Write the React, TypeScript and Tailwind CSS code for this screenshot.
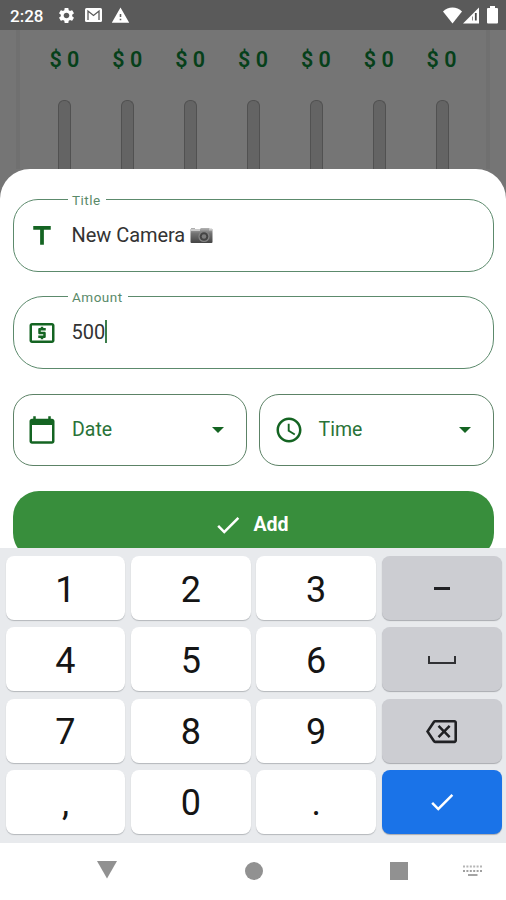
import type { ReactNode } from "react";
import {
  MdAccessTime,
  MdCalendarToday,
  MdCheck,
  MdLocalAtm,
  MdOutlineBackspace,
  MdSettings,
  MdTitle,
  MdWarning,
} from "react-icons/md";

const days = [0, 0, 0, 0, 0, 0, 0];

function StatusBar() {
  return (
    <header className="flex h-[30px] shrink-0 items-center bg-[#5a5a5a] pl-[10px] pr-[8px] text-white">
      <span className="w-[47px] pt-[1px] text-[17px] font-medium leading-[20px]">2:28</span>
      <MdSettings size={19} />
      <svg className="ml-[9px]" width="17" height="14" viewBox="0 0 17 14">
        <rect width="17" height="14" rx="1.5" fill="#fff" />
        <path d="M3 12V3l5.500 4.500L14 3v9" fill="none" stroke="#5a5a5a" strokeWidth="1.300" />
      </svg>
      <MdWarning className="ml-[9px]" size={19} />
      <div className="ml-auto flex items-center">
        <svg width="19" height="17" viewBox="0 0 19 17">
          <path d="M0 4.500C5-.8 14-.8 19 4.500L9.500 16.500z" fill="#fff" />
        </svg>
        <svg className="ml-[1px]" width="17" height="17" viewBox="0 0 17 17">
          <path d="M16 .5v16H0z" fill="#fff" />
          <path d="M12.800 6v7.500" stroke="#4a4a4a" strokeWidth="1.800" />
          <path d="M9.500 9.500v4" stroke="#8a8a8a" strokeWidth="1" />
        </svg>
        <svg className="ml-[7px]" width="11" height="18" viewBox="0 0 11 18">
          <path d="M3 0h5v2h2q1 0 1 1v13.500q0 1-1 1H1q-1 0-1-1V3q0-1 1-1h2z" fill="#fff" />
        </svg>
      </div>
    </header>
  );
}

function Chart() {
  return (
    <section className="flex h-[139px] shrink-0 bg-[#757575] px-[16px]">
      <div className="flex flex-1 border-x-[4px] border-[#707070] px-[13px]">
        {days.map((amount, i) => (
          <div key={i} className="flex flex-1 flex-col items-center">
            <span className="mt-[17px] whitespace-pre text-[21.500px] font-semibold leading-[26px] text-[#06401a]">
              $ {amount}
            </span>
            <div className="ml-[1px] mt-[27px] w-[13px] flex-1 rounded-t-[6px] border border-b-0 border-[#515151] bg-[#646464]" />
          </div>
        ))}
      </div>
    </section>
  );
}

function Field({ label, icon, className, children }: { label: string; icon: ReactNode; className: string; children: ReactNode }) {
  return (
    <div className={`relative flex h-[73px] items-center border border-[#5c8a6c] pl-[13px] ${className}`}>
      <span className="absolute left-[54px] top-[-8px] bg-white pl-[4.500px] pr-[5px] text-[13.500px] leading-[16px] tracking-[0.5px] text-[#5a8a69]">
        {label}
      </span>
      <span className="w-[45px] text-[#146422]">{icon}</span>
      <div className="flex items-center pb-[2px] text-[20px] leading-[24px] text-[#333333]">{children}</div>
    </div>
  );
}

function Picker({ label, icon }: { label: string; icon: ReactNode }) {
  return (
    <button className="flex h-[72px] flex-1 items-center rounded-[20px] border border-[#5c8266] pl-[13.500px] pr-[22px] text-[#2a7338]">
      <span className="w-[45px] text-[#146422]">{icon}</span>
      <span className="text-[19.500px] leading-[24px]">{label}</span>
      <svg className="ml-auto" width="12" height="6" viewBox="0 0 12 6">
        <path d="M0 0h12L6 6z" fill="#146422" />
      </svg>
    </button>
  );
}

function CameraEmoji() {
  return (
    <svg className="ml-[5px] mt-[1px]" width="23" height="18" viewBox="0 0 23 18" role="img" aria-label="camera">
      <defs>
        <linearGradient id="body" x1="0" y1="0" x2="0" y2="1">
          <stop offset="0" stopColor="#b4b4b4" />
          <stop offset=".35" stopColor="#747474" />
          <stop offset="1" stopColor="#444" />
        </linearGradient>
      </defs>
      <path d="M1 3V2h4v1h5l1-1h8l1 1h2.500v13q0 1-1 1H1.500q-1 0-1-1V3z" fill="url(#body)" />
      <path d="M1 4h9M19 3.500h3" stroke="#c9c9c9" strokeWidth="2" />
      <circle cx="14" cy="10.500" r="5.600" fill="#848484" />
      <circle cx="14" cy="10.500" r="4.300" fill="#444" />
      <circle cx="14" cy="10.500" r="2.300" fill="#7c7c7c" />
    </svg>
  );
}

function Sheet() {
  return (
    <section className="h-[379px] shrink-0 overflow-hidden bg-[#757575]">
      <div className="h-full rounded-t-[30px] bg-white px-[12.500px] pt-[30px]">
        <Field label="Title" icon={<MdTitle size={30} />} className="rounded-[25px]">
          <span className="tracking-[-0.05px]">New Camera</span>
          <CameraEmoji />
        </Field>
        <Field label="Amount" icon={<MdLocalAtm size={30} />} className="mt-[24px] rounded-[30px]">
          <span>500</span>
          <span className="h-[23px] w-[2px] bg-[#3c7d4b]" />
        </Field>
        <div className="mt-[25px] flex gap-[12px]">
          <Picker label="Date" icon={<MdCalendarToday size={30} />} />
          <Picker label="Time" icon={<MdAccessTime size={30} />} />
        </div>
        <button className="mt-[25px] flex h-[68px] w-full items-center justify-center gap-[10px] rounded-[26px] bg-[#388e3c] pr-[4px] text-[19.500px] font-bold text-white">
          <MdCheck size={30} />
          Add
        </button>
      </div>
    </section>
  );
}

const keys: { label: ReactNode; kind?: "grey" | "blue" }[] = [
  { label: "1" },
  { label: "2" },
  { label: "3" },
  { label: <span className="h-[3px] w-[16px] bg-[#202124]" />, kind: "grey" },
  { label: "4" },
  { label: "5" },
  { label: "6" },
  { label: <span className="h-[8px] w-[28px] border-[2.500px] border-t-0 border-[#303134]" />, kind: "grey" },
  { label: "7" },
  { label: "8" },
  { label: "9" },
  { label: <MdOutlineBackspace size={31} />, kind: "grey" },
  { label: "," },
  { label: "0" },
  { label: "." },
  { label: <MdCheck size={30} />, kind: "blue" },
];

const keyColors = {
  white: "bg-white pt-[3px] text-[#151515] shadow-[0_1px_1px_#b4b7bb]",
  grey: "bg-[#cccdd2] pt-[1px] text-[#202124] shadow-[0_1px_1px_#a9abb0]",
  blue: "bg-[#1a73e8] text-white shadow-[0_1px_1px_#a9abb0]",
};

function Keyboard() {
  return (
    <section className="grid h-[295px] shrink-0 grid-cols-4 grid-rows-4 gap-x-[5.500px] gap-y-[7.300px] bg-[#e8eaed] pb-[9px] pl-[5.500px] pr-[4.500px] pt-[8px]">
      {keys.map((key, i) => (
        <button
          key={i}
          className={`flex items-center justify-center rounded-[8px] text-[36px] leading-[40px] ${keyColors[key.kind ?? "white"]}`}
        >
          {key.label}
        </button>
      ))}
    </section>
  );
}

function NavBar() {
  return (
    <nav className="flex h-[57px] shrink-0 items-start bg-white pl-[97px] pt-[18px] text-[#919191]">
      <svg width="20" height="18" viewBox="0 0 20 18">
        <path d="M0 0h20L10 17.500z" fill="currentColor" />
      </svg>
      <span className="ml-[128px] mt-[1px] h-[18px] w-[18px] rounded-full bg-[#919191]" />
      <span className="ml-[127px] mt-[1px] h-[18px] w-[18px] bg-[#919191]" />
      <svg className="ml-[54px] mt-[4px]" width="21" height="13" viewBox="0 0 21 13">
        <path d="M1 1.500h19" stroke="#b5b5b5" strokeWidth="2" strokeDasharray="2 1.400" />
        <path d="M1 6h19" stroke="#a0a0a0" strokeWidth="2" strokeDasharray="2 1.400" />
        <path d="M6 10h9.500" stroke="#9a9a9a" strokeWidth="1.800" />
      </svg>
    </nav>
  );
}

export default function App() {
  return (
    <main className="flex h-[900px] w-[506px] flex-col overflow-hidden bg-white font-['Roboto',sans-serif]">
      <StatusBar />
      <Chart />
      <Sheet />
      <Keyboard />
      <NavBar />
    </main>
  );
}
